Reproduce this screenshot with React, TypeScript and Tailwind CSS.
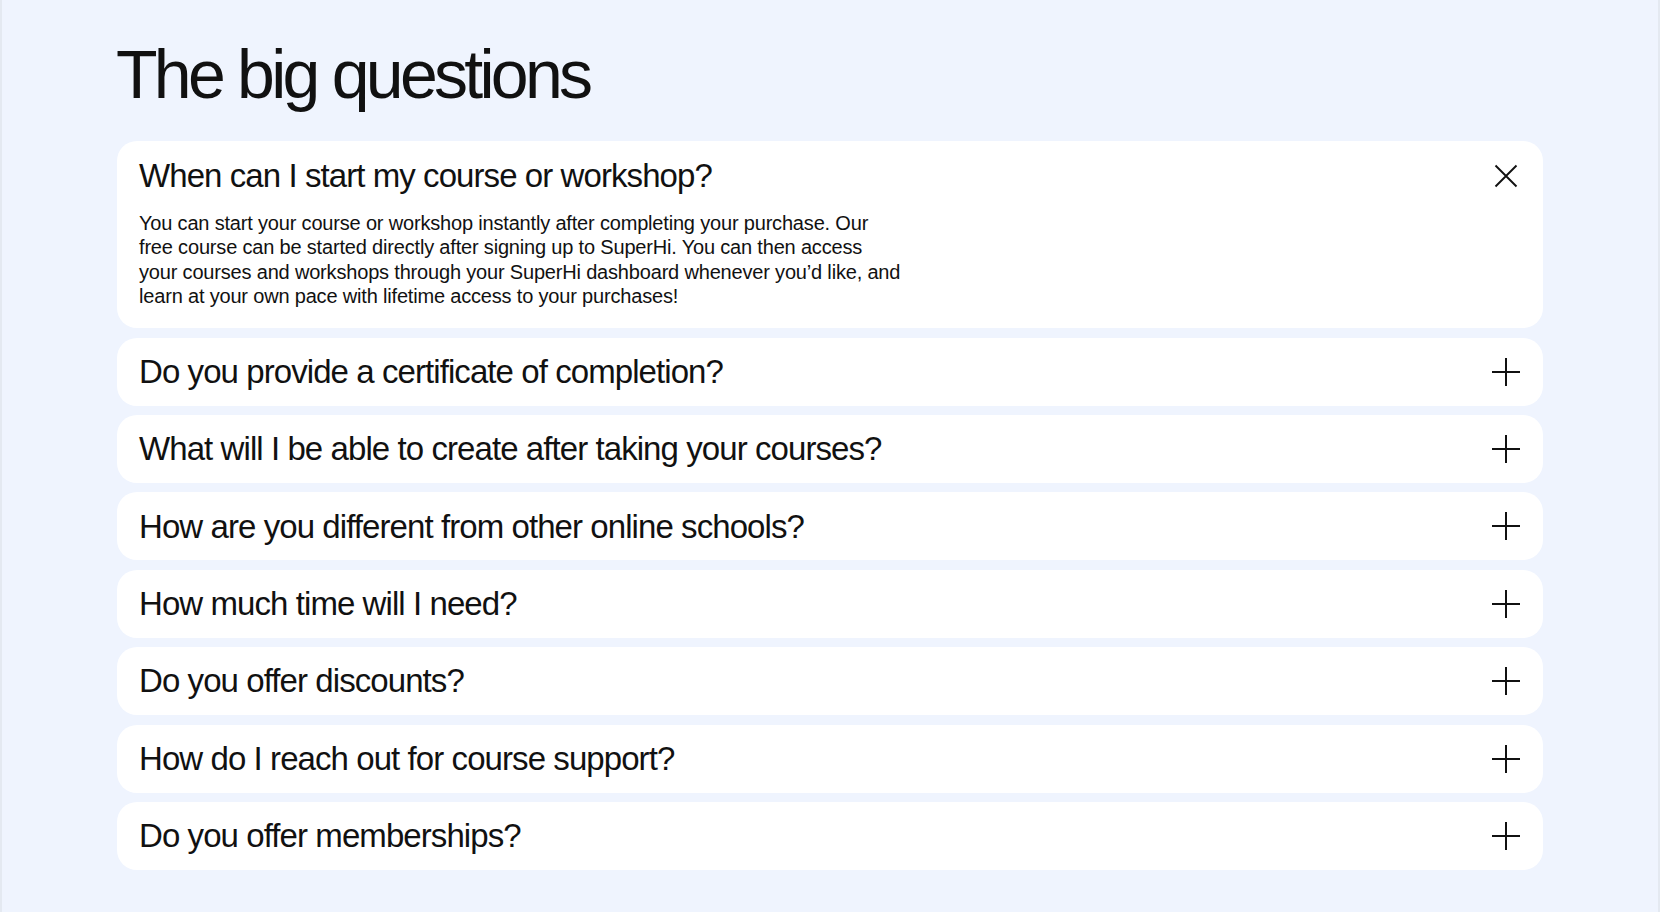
import React from "react";

const questions = [
  "Do you provide a certificate of completion?",
  "What will I be able to create after taking your courses?",
  "How are you different from other online schools?",
  "How much time will I need?",
  "Do you offer discounts?",
  "How do I reach out for course support?",
  "Do you offer memberships?",
];

function PlusIcon() {
  return (
    <svg width="30" height="30" viewBox="0 0 30 30" fill="none" stroke="#111" strokeWidth="2">
      <path d="M15 1V29M1 15H29" />
    </svg>
  );
}

function CloseIcon() {
  return (
    <svg width="30" height="30" viewBox="0 0 30 30" fill="none" stroke="#111" strokeWidth="1.9">
      <path d="M4.5 4.5L25.5 25.5M25.5 4.5L4.5 25.5" />
    </svg>
  );
}

export default function App() {
  return (
    <div
      className="min-h-screen bg-[#eff4fe] border-x-2 border-[#e4e9f1] text-[#111111]"
      style={{ fontFamily: '"Liberation Sans", Arial, sans-serif' }}
    >
      <div className="mx-auto w-[1426px] pt-[40px] pb-[42px]">
        <h1 className="text-[68px] leading-none tracking-[-0.055em] font-normal -ml-[1px]">
          The big questions
        </h1>

        <div className="mt-[33px] flex flex-col gap-[9.4px]">
          {/* open item */}
          <div className="bg-white rounded-[20px] px-[22px]">
            <div className="h-[70px] flex items-center justify-between">
              <span className="text-[33px] tracking-[-0.028em]">
                When can I start my course or workshop?
              </span>
              <CloseIcon />
            </div>
            <p className="text-[20px] leading-[24.3px] tracking-[-0.009em] pb-[20px] max-w-[820px]">
              You can start your course or workshop instantly after completing your purchase. Our
              <br />
              free course can be started directly after signing up to SuperHi. You can then access
              <br />
              your courses and workshops through your SuperHi dashboard whenever you’d like, and
              <br />
              learn at your own pace with lifetime access to your purchases!
            </p>
          </div>

          {questions.map((q) => (
            <div
              key={q}
              className="bg-white rounded-[20px] px-[22px] h-[68px] flex items-center justify-between"
            >
              <span className="text-[33px] tracking-[-0.028em]">{q}</span>
              <PlusIcon />
            </div>
          ))}
        </div>
      </div>
    </div>
  );
}
